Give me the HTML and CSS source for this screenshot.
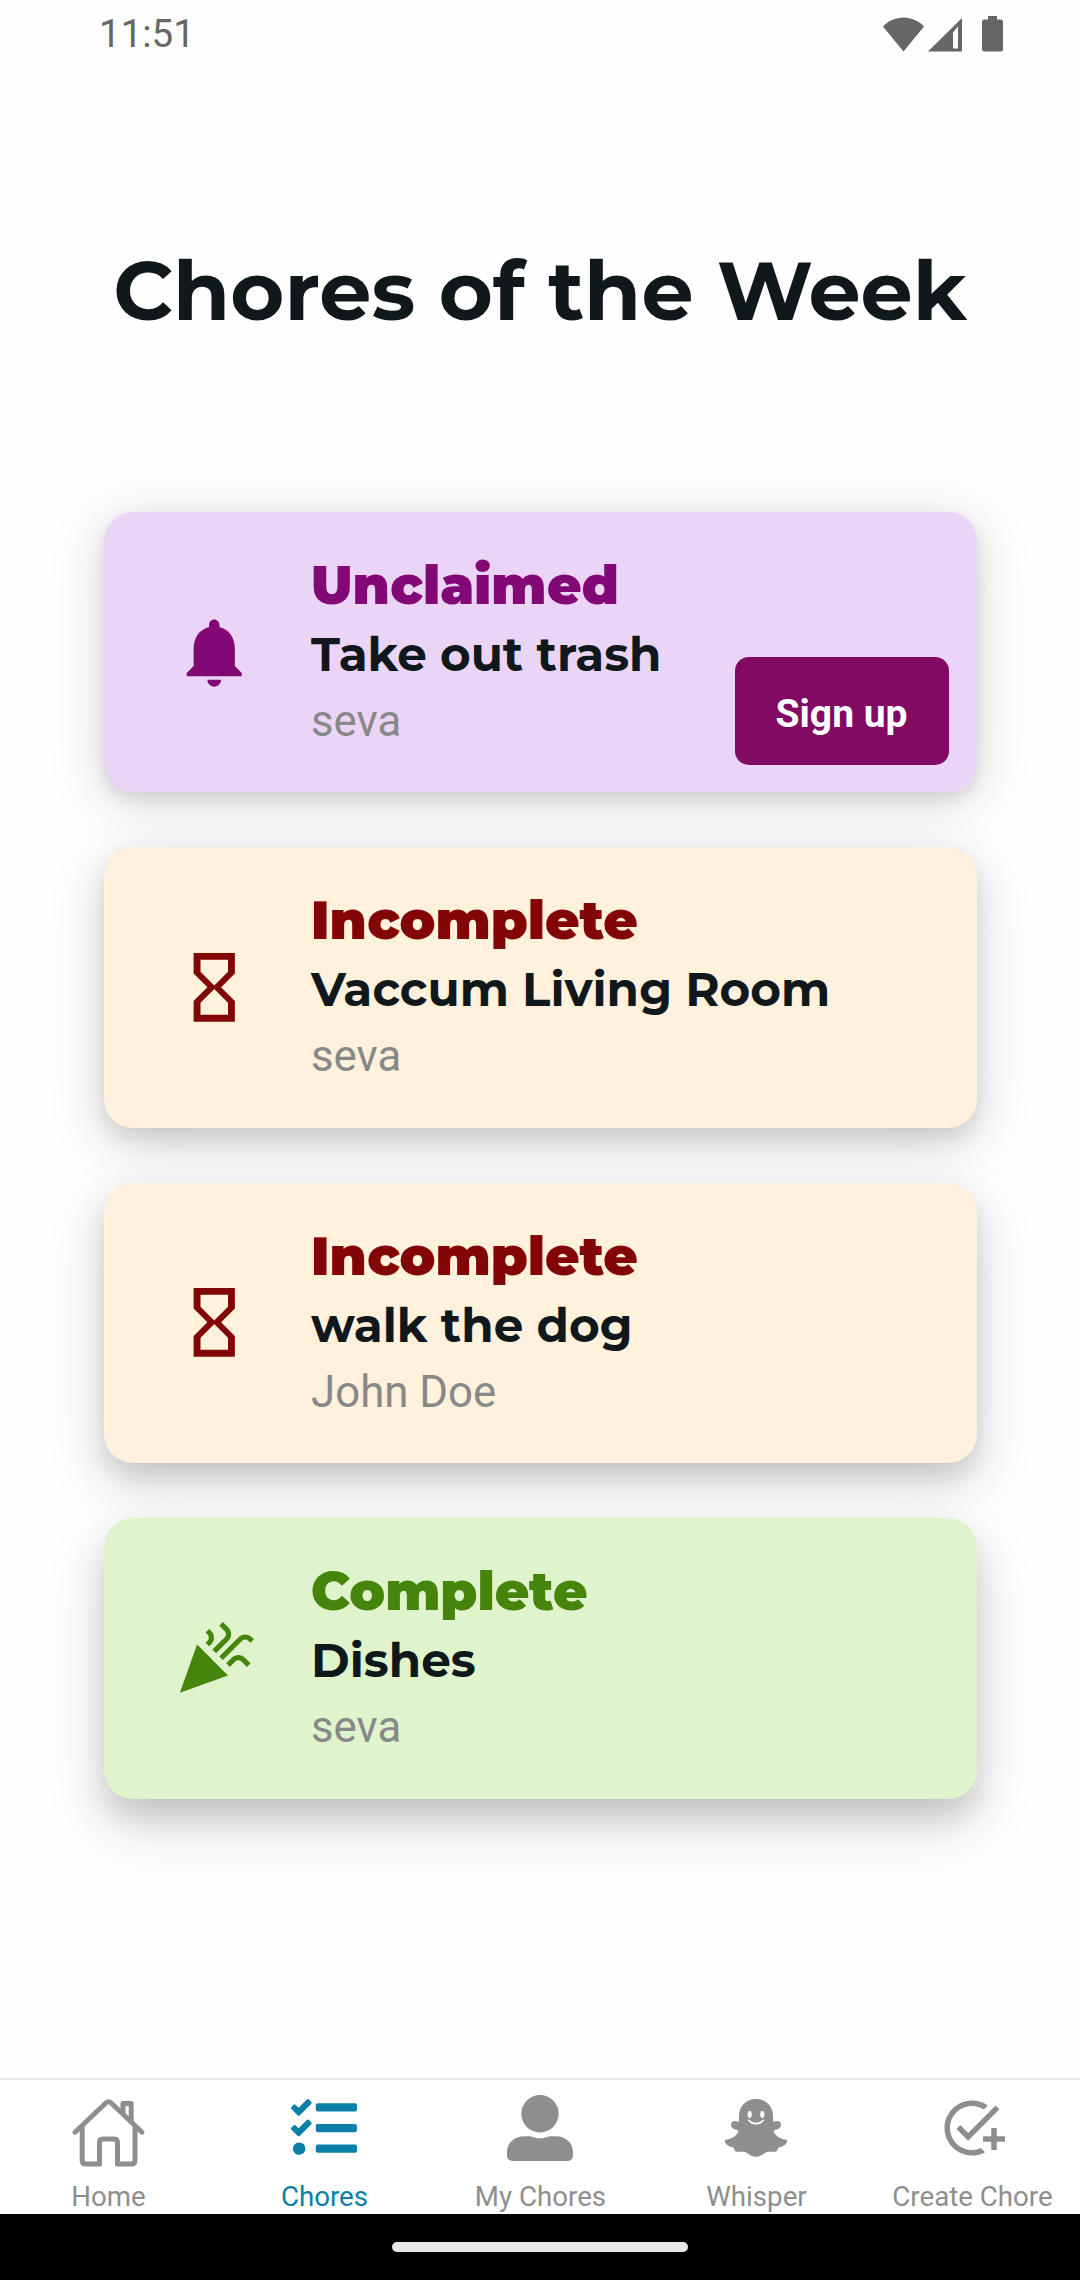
FILE: index.html
```html
<!DOCTYPE html>
<html lang="en">
<head>
    <meta charset="UTF-8">
    <meta name="viewport" content="width=device-width, initial-scale=1.0">
    <title>Chores of the Week</title>
    <link rel="stylesheet" href="styles.css">
</head>
<body>
    <header class="status-bar">
        <span class="time">11:51</span>
        <svg class="status-icons" width="122" height="38" viewBox="0 0 122 38">
            <path d="M0 11.5C5 6 12.5 2.5 20.5 2.5S36 6 41 11.5L20.5 36.5z"/>
            <path fill-rule="evenodd" d="M79 3v33.5H45zM70 17.500v16h5v-22z"/>
            <path d="M105 1h9v3.500h3.500q2.500 0 2.500 2.500v27q0 2.500-2.500 2.500h-16q-2.500 0-2.500-2.500v-27q0-2.500 2.500-2.500h3.500z"/>
        </svg>
    </header>

    <main>
        <h1>Chores of the Week</h1>

        <div class="chores">
            <div class="card unclaimed">
                <svg class="card-icon" viewBox="0 0 24 24"><path d="M12 22c1.100 0 2-.9 2-2h-4c0 1.100.89 2 2 2zm6-6v-5c0-3.070-1.640-5.640-4.500-6.320V4c0-.83-.67-1.500-1.500-1.500s-1.500.67-1.500 1.500v.68C7.630 5.360 6 7.920 6 11v5l-2 2v1h16v-1l-2-2z"/></svg>
                <div class="card-text">
                    <h2>Unclaimed</h2>
                    <h3>Take out trash</h3>
                    <p>seva</p>
                </div>
                <button class="signup">Sign up</button>
            </div>
            <div class="card incomplete">
                <svg class="card-icon" viewBox="0 0 24 24"><path d="M6 2v6h.01L6 8.010 10 12l-4 4 .01.01H6V22h12v-5.990h-.01L18 16l-4-4 4-3.990-.01-.01H18V2H6zm10 14.500V20H8v-3.500l4-4 4 4zm-4-5l-4-4V4h8v3.500l-4 4z"/></svg>
                <div class="card-text">
                    <h2>Incomplete</h2>
                    <h3>Vaccum Living Room</h3>
                    <p>seva</p>
                </div>
            </div>
            <div class="card incomplete second">
                <svg class="card-icon" viewBox="0 0 24 24"><path d="M6 2v6h.01L6 8.010 10 12l-4 4 .01.01H6V22h12v-5.990h-.01L18 16l-4-4 4-3.990-.01-.01H18V2H6zm10 14.500V20H8v-3.500l4-4 4 4zm-4-5l-4-4V4h8v3.500l-4 4z"/></svg>
                <div class="card-text">
                    <h2>Incomplete</h2>
                    <h3>walk the dog</h3>
                    <p>John Doe</p>
                </div>
            </div>
            <div class="card complete">
                <svg class="card-icon" viewBox="0 0 24 24">
                    <path d="M2 22l14-5-9-9z"/>
                    <path d="M14.530 12.530l5.590-5.590c.49-.49 1.280-.49 1.770 0l.59.59 1.060-1.060-.59-.59c-1.070-1.070-2.820-1.070-3.890 0l-5.590 5.590 1.060 1.060z"/>
                    <path d="M10.060 6.880l-.59.59 1.060 1.060.59-.59c1.070-1.070 1.070-2.820 0-3.890l-.59-.59-1.060 1.070.59.59c.48.48.48 1.280 0 1.760z"/>
                    <path d="M17.060 11.880l-1.590 1.590 1.060 1.060 1.590-1.590c.49-.49 1.280-.49 1.770 0l1.610 1.610 1.060-1.060-1.610-1.610c-1.080-1.080-2.820-1.080-3.890 0z"/>
                    <path d="M15.060 5.880l-3.590 3.590 1.060 1.060 3.590-3.590c1.070-1.070 1.070-2.820 0-3.890l-1.590-1.590-1.060 1.060 1.590 1.590c.48.54.48 1.280 0 1.770z"/>
                </svg>
                <div class="card-text">
                    <h2>Complete</h2>
                    <h3>Dishes</h3>
                    <p>seva</p>
                </div>
            </div>
        </div>
    </main>

    <nav class="tabs">
        <a class="tab">
            <svg class="home" viewBox="0 0 74 66"><g fill="none" stroke="currentColor" stroke-width="5" stroke-linecap="round" stroke-linejoin="round"><path d="M4 37.200L34.800 8q2.700-2.500 5.400 0L71 37.200"/><path d="M11.200 33v32.500q0 3.500 3.500 3.500H28.500V47.500q0-3.500 3.500-3.500h11q3.500 0 3.500 3.500V69h14q3.500 0 3.500-3.500V33"/><path d="M52 18V8.500H60.200V26"/></g></svg>
            <span>Home</span>
        </a>
        <a class="tab active">
            <svg viewBox="0 0 512 512"><path d="M139.610 35.500a12 12 0 0 0-17 0L58.930 98.810l-22.700-22.120a12 12 0 0 0-17 0L3.530 92.410a12 12 0 0 0 0 17l47.590 47.400a12.780 12.780 0 0 0 17.610 0l15.590-15.620L156.520 69a12.090 12.090 0 0 0 .09-17zm0 159.190a12 12 0 0 0-17 0l-63.680 63.720-22.700-22.100a12 12 0 0 0-17 0L3.530 252a12 12 0 0 0 0 17L51 316.500a12.770 12.770 0 0 0 17.600 0l15.700-15.690 72.200-72.220a12 12 0 0 0 .09-16.900zM64 368c-26.490 0-48.590 21.500-48.590 48S37.530 464 64 464a48 48 0 0 0 0-96zm432 16H208a16 16 0 0 0-16 16v32a16 16 0 0 0 16 16h288a16 16 0 0 0 16-16v-32a16 16 0 0 0-16-16zm0-320H208a16 16 0 0 0-16 16v32a16 16 0 0 0 16 16h288a16 16 0 0 0 16-16V80a16 16 0 0 0-16-16zm0 160H208a16 16 0 0 0-16 16v32a16 16 0 0 0 16 16h288a16 16 0 0 0 16-16v-32a16 16 0 0 0-16-16z"/></svg>
            <span>Chores</span>
        </a>
        <a class="tab">
            <svg viewBox="0 0 66 66"><circle cx="33" cy="18.700" r="18.700"/><path d="M17 41.200h5c3 0 5 2 11 2s8-2 11-2h5c10 0 17 7 17 16v2.800q0 6-6 6H6q-6 0-6-6v-2.800c0-9 7-16 17-16z"/></svg>
            <span>My Chores</span>
        </a>
        <a class="tab">
            <svg viewBox="0 0 66 66"><path d="M33 4c10 0 17 7 17 17v6c2-1 4-1.500 6-.5 3 1.500 2.500 6-.5 7.200l-5 2c1 4.500 6.500 8.600 13.500 9 .5 4-2.500 6.800-8.500 7.700l-2 4c-4 1-8-.8-11.500 1.500-3 2-5.500 3.900-9 3.900s-6-1.900-9-3.900c-3.500-2.300-7.500-.5-11.500-1.500l-2-4C4.500 51.500 1.500 48.700 2 44.700c7-.4 12.500-4.500 13.500-9l-5-2c-3-1.200-3.500-5.700-.5-7.200 2-1 4-.5 6 .5v-6C16 11 23 4 33 4z"/><g fill="#fff"><ellipse cx="26.700" cy="19.500" rx="2.100" ry="3.400"/><ellipse cx="39.300" cy="19.500" rx="2.100" ry="3.400"/></g><path d="M26 25.500c3.500 4.300 10.500 4.300 14 0" fill="none" stroke="#fff" stroke-width="1.800" stroke-linecap="round"/></svg>
            <span>Whisper</span>
        </a>
        <a class="tab">
            <svg viewBox="0 0 24 24"><path d="M22 5.180L10.590 16.600l-4.240-4.240 1.410-1.410 2.830 2.830 10-10L22 5.180zM12 20c-4.420 0-8-3.580-8-8s3.580-8 8-8c1.570 0 3.040.46 4.280 1.250l1.450-1.450C16.100 2.670 14.130 2 12 2 6.480 2 2 6.480 2 12s4.480 10 10 10c1.730 0 3.360-.44 4.780-1.220l-1.500-1.500c-1 .46-2.110.72-3.280.72zm7-5h-3v2h3v3h2v-3h3v-2h-3v-3h-2v3z"/></svg>
            <span>Create Chore</span>
        </a>
    </nav>

    <footer class="gesture-bar"><div class="pill"></div></footer>
</body>
</html>
```

FILE: styles.css
```css
* { box-sizing: border-box; }
body { margin: 0; width: 1080px; height: 2280px; display: flex; flex-direction: column; overflow: hidden; background-color: #fefefe; font-family: Roboto, sans-serif; }
h1, h2, h3, p { margin: 0; white-space: nowrap; }
h1, h2, h3 { font-family: Montserrat, Inter, sans-serif; }
svg { display: block; fill: currentColor; flex: none; }

.status-bar { height: 70px; padding: 15px 75px 0 99px; display: flex; justify-content: space-between; color: #666; }
.time { font-size: 38.5px; line-height: 38px; }

main { flex: 1; display: flex; flex-direction: column; align-items: center; overflow: hidden; }
h1 { margin-top: 171px; font-size: 82.6px; line-height: 100px; font-weight: 700; color: #10181c; }

.chores { margin-top: 171px; width: 873px; display: flex; flex-direction: column; gap: 55px; }
.card { height: 280.3px; padding-left: 69px; display: flex; align-items: center; border-radius: 29px; }
.card-icon { width: 82.5px; height: 82.5px; margin-right: 56px; }
.card-text { flex: 1; }
.card h2 { font-size: 53px; line-height: 69px; font-weight: 900; }
.card h3 { font-size: 46.85px; line-height: 70px; font-weight: 700; color: #10181c; }
.card p { font-size: 43.8px; line-height: 63px; color: #888; }

.unclaimed { background-color: #ebd5f7; color: #820875; box-shadow: 0 7px 20px rgba(0,0,0,0.12), 0 10px 60px rgba(0,0,0,0.13); }
.incomplete { background-color: #fff1dc; color: #820606; box-shadow: 0 11px 24px rgba(0,0,0,0.12), 0 16px 60px rgba(0,0,0,0.14); }
.second { box-shadow: 0 14px 26px rgba(0,0,0,0.12), 0 20px 60px rgba(0,0,0,0.15); }
.complete { height: 281px; background-color: #dff4cc; color: #45850c; box-shadow: 0 18px 30px rgba(0,0,0,0.12), 0 25px 60px rgba(0,0,0,0.15); }

.signup { align-self: flex-end; width: 214px; height: 108px; margin: 0 28px 27.3px 0; padding: 5px 0 0; border: 0; border-radius: 14px; background-color: #820a62; color: #fff; font: 700 39px Roboto, sans-serif; }

.tabs { height: 136px; border-top: 2px solid #e8e8e8; background-color: #fff; display: flex; color: #8e8e8e; }
.tab { width: 216px; padding-top: 15px; display: flex; flex-direction: column; align-items: center; }
.tab svg { width: 66px; height: 66px; overflow: visible; }
.tab .home { width: 74px; }
.tab span { margin-top: 20px; padding-left: 1px; font-size: 27.7px; line-height: 32px; white-space: nowrap; }
.active { color: #0b7fa8; }

.gesture-bar { height: 66px; padding-top: 28px; background-color: #000; }
.pill { width: 296px; height: 10px; margin: 0 auto; border-radius: 5px; background-color: #e9e9e9; }
```
